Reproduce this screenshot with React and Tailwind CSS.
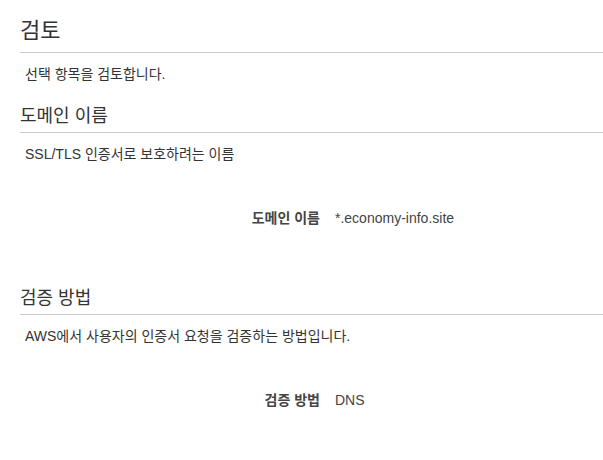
import React from "react";

const Section = ({ title, desc, label, value, big }) => (
  <div>
    <h2
      className={`${
        big ? "text-[22px] leading-[28px] pt-[17px] pb-[7px]" : "text-[18px] leading-[22px] pt-[3px] pb-[5px]"
      } text-[#333] border-b border-[#ccc]`}
    >
      {title}
    </h2>
    <p className="pl-[5px] pt-[11px] text-[14px] leading-[20px] text-[#333]">{desc}</p>
    {label && (
      <div className="grid grid-cols-[300px_1fr] gap-[15px] pt-[44px] pb-[56px] text-[14px] leading-[20px]">
        <span className="text-right font-bold text-[#444]">{label}</span>
        <span className="text-[#444]">{value}</span>
      </div>
    )}
  </div>
);

export default function App() {
  return (
    <div
      className="min-h-[460px] bg-white pl-[20px]"
      style={{ fontFamily: '"Liberation Sans", "Noto Sans CJK KR", sans-serif' }}
    >
      <Section big title="검토" desc="선택 항목을 검토합니다." />
      <div className="h-[18px]" />
      <Section
        title="도메인 이름"
        desc="SSL/TLS 인증서로 보호하려는 이름"
        label="도메인 이름"
        value="*.economy-info.site"
      />
      <Section
        title="검증 방법"
        desc="AWS에서 사용자의 인증서 요청을 검증하는 방법입니다."
        label="검증 방법"
        value="DNS"
      />
    </div>
  );
}
